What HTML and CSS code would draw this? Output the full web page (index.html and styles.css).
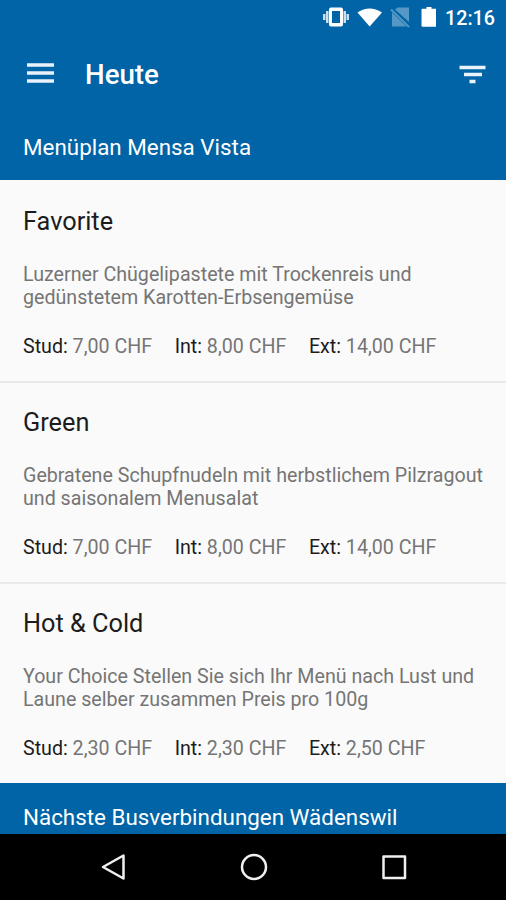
FILE: index.html
```html
<!DOCTYPE html>
<html lang="de">
<head>
<meta charset="utf-8">
<title>Heute</title>
<link rel="stylesheet" href="styles.css">
</head>
<body>
<div class="screen">
  <div class="status">
    <svg class="status-icons" viewBox="0 0 114 24" width="114" height="24">
      <g fill="#fff">
        <path fill-rule="evenodd" d="M9 2.500h10a2 2 0 0 1 2 2v15a2 2 0 0 1-2 2H9a2 2 0 0 1-2-2v-15a2 2 0 0 1 2-2zm1 3.500v12h8V6z"/>
        <path opacity=".8" d="M1 9h2.500v6H1zM4 6h2.500v12H4zM21.500 6H24v12h-2.500zM24.500 9H27v6h-2.500z"/>
        <path d="M35.500 7.500Q47.500-.5 60 7.500L47.700 21.500z"/>
        <path d="M100.500 3.700h4V2h5v1.700h4q1 0 1 1v16q0 1-1 1h-13q-1 0-1-1v-16q0-1 1-1z"/>
      </g>
      <path d="M75.500 2.500H87v14.500L73 4.500zM70 7.500L84.500 21.500H70z" fill="#5598c6"/>
      <path d="M69 4.500l18 17.500" stroke="#5598c6" stroke-width="1.800"/>
    </svg>
    <span class="clock">12:16</span>
  </div>
  <header class="bar">
    <svg class="burger" viewBox="0 0 27 20" width="27" height="20"><path d="M0 2h27M0 10h27M0 18h27" stroke="#eaf2fc" stroke-width="3.400"/></svg>
    <h1 class="title">Heute</h1>
    <svg class="filter" viewBox="0 0 27 20" width="27" height="20"><path d="M.5 2.500h26M5 9.500h18M10.500 16.500h6" stroke="#eaf2fc" stroke-width="3.500"/></svg>
  </header>
  <h2 class="section">Menüplan Mensa Vista</h2>
  <main class="list">
    <article class="menu">
      <h3 class="name">Favorite</h3>
      <p class="desc">Luzerner Chügelipastete mit Trockenreis und<br>gedünstetem Karotten-Erbsengemüse</p>
      <div class="prices"><span><b>Stud:</b> 7,00 CHF</span><span><b>Int:</b> 8,00 CHF</span><span><b>Ext:</b> 14,00 CHF</span></div>
    </article>
    <article class="menu">
      <h3 class="name">Green</h3>
      <p class="desc">Gebratene Schupfnudeln mit herbstlichem Pilzragout<br>und saisonalem Menusalat</p>
      <div class="prices"><span><b>Stud:</b> 7,00 CHF</span><span><b>Int:</b> 8,00 CHF</span><span><b>Ext:</b> 14,00 CHF</span></div>
    </article>
    <article class="menu">
      <h3 class="name">Hot &amp; Cold</h3>
      <p class="desc">Your Choice Stellen Sie sich Ihr Menü nach Lust und<br>Laune selber zusammen Preis pro 100g</p>
      <div class="prices"><span><b>Stud:</b> 2,30 CHF</span><span><b>Int:</b> 2,30 CHF</span><span><b>Ext:</b> 2,50 CHF</span></div>
    </article>
  </main>
  <h2 class="section section-next">Nächste Busverbindungen Wädenswil</h2>
  <nav class="nav">
    <svg viewBox="0 0 26 28" width="26" height="28"><path d="M23.500 2.500v23L3 14z"/></svg>
    <svg viewBox="0 0 28 28" width="28" height="28"><circle cx="14" cy="14" r="12"/></svg>
    <svg viewBox="0 0 26 28" width="26" height="28"><path d="M2.500 3.500h21.500v21.500H2.500z"/></svg>
  </nav>
</div>
</body>
</html>
```
FILE: styles.css
```css
* { box-sizing: border-box; margin: 0; padding: 0; }
body { font-family: Roboto, sans-serif; background: #fafafa; }
.screen { width: 506px; height: 900px; overflow: hidden; display: flex; flex-direction: column; background: #fafafa; }
.status { height: 36px; flex: none; display: flex; align-items: center; justify-content: flex-end; gap: 9px; padding-right: 11px; background: #0064a6; color: #fff; }
.status-icons { position: relative; top: -1px; }
.clock { font-size: 19.700px; font-weight: 500; }
.bar { height: 77px; flex: none; display: flex; align-items: center; padding: 0 20px 0 27px; background: #0064a6; color: #fff; }
.burger { margin-top: -3px; }
.title { margin-left: 31px; font-size: 27.700px; font-weight: 500; flex: 1; }
.section { height: 67px; flex: none; padding-left: 23px; background: #0064a6; color: #fff; font-size: 22.400px; font-weight: 400; line-height: 69px; }
.section-next { height: 51px; overflow: hidden; }
.menu { height: 201px; padding: 27px 0 0 23px; white-space: nowrap; }
.menu + .menu { border-top: 2px solid #e9e9e9; padding-top: 25px; }
.name { font-size: 25.300px; font-weight: 400; line-height: 30px; color: #1c1c1c; }
.desc { margin-top: 26px; font-size: 19.650px; line-height: 23px; color: #757575; }
.prices { display: flex; gap: 22.500px; margin-top: 26px; font-size: 19.650px; line-height: 23px; color: #757575; }
.prices b { font-weight: 400; color: #1c1c1c; }
.nav { flex: 1; display: flex; align-items: center; justify-content: space-between; padding: 0 99px 1px 100px; background: #000; }
.nav svg { fill: none; stroke: #f0f0f0; stroke-width: 2.500; stroke-linejoin: round; }
```
